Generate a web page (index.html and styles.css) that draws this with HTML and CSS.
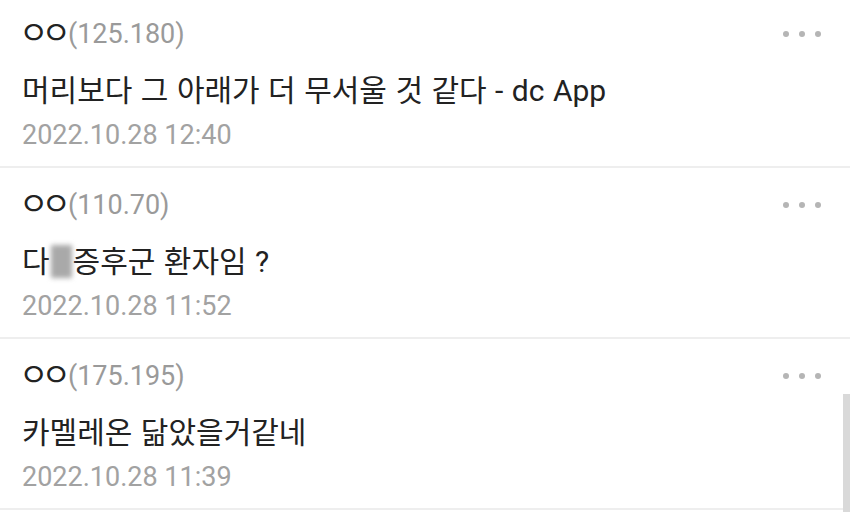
FILE: index.html
```html
<!DOCTYPE html>
<html lang="ko">
<head>
<meta charset="utf-8">
<title>댓글</title>
<link rel="stylesheet" href="styles.css">
</head>
<body>
<div class="screen">
  <ul class="comments">
    <li class="comment">
      <div class="head">
        <span class="nick"><span class="name">ㅇㅇ</span><span class="ip">(125.180)</span></span>
        <span class="more"><i></i><i></i><i></i></span>
      </div>
      <p class="body">머리보다 그 아래가 더 무서울 것 같다 - dc App</p>
      <div class="date">2022.10.28 12:40</div>
    </li>
    <li class="comment">
      <div class="head">
        <span class="nick"><span class="name">ㅇㅇ</span><span class="ip">(110.70)</span></span>
        <span class="more"><i></i><i></i><i></i></span>
      </div>
      <p class="body">다<span class="masked"></span>증후군 환자임 ?</p>
      <div class="date">2022.10.28 11:52</div>
    </li>
    <li class="comment">
      <div class="head">
        <span class="nick"><span class="name">ㅇㅇ</span><span class="ip">(175.195)</span></span>
        <span class="more"><i></i><i></i><i></i></span>
      </div>
      <p class="body">카멜레온 닮았을거같네</p>
      <div class="date">2022.10.28 11:39</div>
    </li>
  </ul>
  <div class="scrollbar"></div>
</div>
</body>
</html>
```
FILE: styles.css
```css
html, body {
  margin: 0;
  padding: 0;
  background: #ffffff;
}

body {
  font-family: Roboto, "Noto Sans CJK KR", sans-serif;
  color: #222222;
}

.screen {
  position: relative;
  width: 850px;
  height: 512px;
  overflow: hidden;
}

.comments {
  list-style: none;
  margin: -3px 0 0;
  padding: 0;
}

.comment {
  padding: 17px 0 9px 22px;
  border-bottom: 2px solid #eeeeee;
  height: 143px;
}

.head {
  display: flex;
  align-items: center;
  justify-content: space-between;
  height: 40px;
}

.nick {
  display: flex;
  align-items: center;
  font-size: 27px;
}

/* nickname drawn with wide jamo circles, packed closely */
.name {
  font-family: "Noto Sans CJK KR", sans-serif;
  font-size: 32px;
  line-height: 40px;
  letter-spacing: -7px;
  color: #222222;
  margin: 0 4px 8px -3px;
}

.ip {
  color: #9a9a9a;
}

.more {
  display: flex;
  gap: 10px;
  margin-right: 29px;
}

.more i {
  width: 6px;
  height: 6px;
  border-radius: 50%;
  background: #b5b5b5;
}

.body {
  margin: 15px 0 0;
  font-size: 30px;
  line-height: 44px;
  height: 44px;
  word-spacing: 1px;
  white-space: nowrap;
}

.masked {
  display: inline-block;
  vertical-align: middle;
  width: 21px;
  height: 33px;
  margin: -6px 1px 0 1px;
  background: #a9a9a9;
  filter: blur(2.5px);
}

.date {
  font-size: 27px;
  line-height: 44px;
  color: #a2a2a2;
}

.scrollbar {
  position: absolute;
  right: 0;
  top: 394px;
  width: 7px;
  bottom: 0;
  background: #d9d9d9;
}
```
